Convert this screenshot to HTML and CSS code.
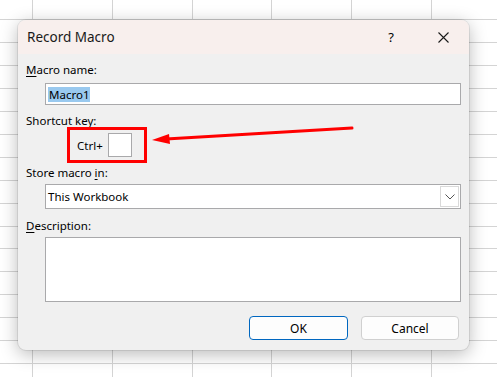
FILE: index.html
```html
<!DOCTYPE html>
<html lang="en">
<head>
<meta charset="UTF-8">
<title>Record Macro</title>
<link rel="stylesheet" href="styles.css">
</head>
<body>

<div class="dialog">
  <div class="title-bar">
    <div class="title">Record Macro</div>
    <div class="title-buttons">
      <span class="help-btn">?</span>
      <svg class="close-btn" width="11" height="11" viewBox="0 0 11 11">
        <path d="M0.5 0.5 L10.5 10.5 M10.5 0.5 L0.5 10.5" stroke="#1a1a1a" stroke-width="1.1" fill="none"/>
      </svg>
    </div>
  </div>

  <div class="dialog-body">
    <div class="label"><u>M</u>acro name:</div>
    <div class="field name-field"><span class="selected">Macro1</span></div>

    <div class="label shortcut-label">Shortcut key:</div>
    <div class="shortcut-row">
      <div class="highlight-box">
        <span class="ctrl">Ctrl+</span>
        <div class="key-box"></div>
      </div>
    </div>

    <div class="label store-label">Store macro <u>i</u>n:</div>
    <div class="field combo">
      <span>This Workbook</span>
      <div class="combo-btn">
        <svg width="10" height="6" viewBox="0 0 10 6"><path d="M0.5 0.5 L5 5 L9.5 0.5" stroke="#555" stroke-width="1" fill="none"/></svg>
      </div>
    </div>

    <div class="label desc-label"><u>D</u>escription:</div>
    <div class="field desc"></div>

    <div class="buttons">
      <button class="btn btn-ok">OK</button>
      <button class="btn">Cancel</button>
    </div>
  </div>

  <!-- annotation arrow -->
  <svg class="arrow" width="220" height="30" viewBox="0 0 220 30">
    <path d="M216 7 L30 18" stroke="#ff0000" stroke-width="3" stroke-linecap="round" fill="none"/>
    <path d="M16 19 L33 13 L34 23 Z" fill="#ff0000"/>
  </svg>
</div>

</body>
</html>
```

FILE: styles.css
```css
body {
  margin: 0;
  width: 497px;
  height: 377px;
  overflow: hidden;
  font-family: 'Segoe UI', 'Noto Sans', sans-serif;
  background-color: #ffffff;
  background-image:
    repeating-linear-gradient(to right, transparent 0, transparent 32px, #d4d4d4 32px, #d4d4d4 33px, transparent 33px, transparent 79.8px),
    repeating-linear-gradient(to bottom, transparent 0, transparent 19.5px, #d4d4d4 19.5px, #d4d4d4 20.5px, transparent 20.5px, transparent 22.9px);
  background-position: 0 0, 0 0;
}

.dialog {
  position: relative;
  margin: 20px 0 0 18px;
  width: 451px;
  height: 330px;
  background-color: #f0f0f0;
  border-radius: 8px;
  box-shadow: 0 4px 18px rgba(0,0,0,.28), 0 0 0 1px rgba(0,0,0,.08);
  overflow: hidden;
  color: #000;
  font-size: 11.5px;
}

.title-bar {
  height: 34px;
  background-color: #f8efed;
  display: flex;
  align-items: center;
  justify-content: space-between;
}

.title {
  font-size: 13.5px;
  padding-left: 9px;
  color: #1a1a1a;
}

.title-buttons {
  display: flex;
  align-items: center;
  padding-right: 20px;
}

.help-btn {
  font-size: 13px;
  margin-right: 44px;
}

.close-btn {
  display: block;
}

.dialog-body {
  padding: 0 8px 0 8px;
  display: flex;
  flex-direction: column;
}

.label {
  height: 16px;
  line-height: 16px;
  margin-top: 8px;
}

.label u {
  text-decoration-thickness: 1px;
  text-underline-offset: 2px;
}

.field {
  margin-left: 19px;
  width: 416px;
  box-sizing: border-box;
  border: 1px solid #a9a9ab;
  background: #fff;
}

.name-field {
  height: 22px;
  margin-top: 5px;
  display: flex;
  align-items: center;
  padding-left: 2px;
}

.selected {
  background: #99c9ef;
  padding: 0 1px;
  line-height: 15px;
}

.shortcut-label {
  margin-top: 8px;
}

.shortcut-row {
  margin-top: -2px;
  padding-left: 41px;
}

.highlight-box {
  width: 80px;
  height: 36px;
  box-sizing: border-box;
  border: 3px solid #ff0000;
  display: flex;
  align-items: center;
  padding-left: 7px;
}

.ctrl {
  width: 31px;
}

.key-box {
  width: 24px;
  height: 24px;
  box-sizing: border-box;
  border: 1px solid #a9a9ab;
  background: #fff;
}

.store-label {
  margin-top: 2px;
}

.combo {
  height: 25px;
  margin-top: 3px;
  display: flex;
  align-items: center;
  justify-content: space-between;
  padding-left: 2px;
}

.combo-btn {
  width: 19px;
  height: 21px;
  margin-right: 1px;
  border: 1px solid #d9d9d9;
  display: flex;
  align-items: center;
  justify-content: center;
  box-sizing: border-box;
}

.desc-label {
  margin-top: 9px;
}

.desc {
  height: 65px;
  margin-top: 3px;
}

.buttons {
  display: flex;
  justify-content: flex-end;
  gap: 13px;
  margin-top: 14px;
  padding-right: 2px;
}

.btn {
  width: 98px;
  height: 24px;
  font-family: 'Segoe UI', 'Noto Sans', sans-serif;
  font-size: 12px;
  background: #fdfdfd;
  border: 1px solid #d0d0d0;
  border-radius: 4px;
  color: #000;
}

.btn-ok {
  width: 99px;
  border-color: #0067c0;
}

.arrow {
  position: absolute;
  left: 118px;
  top: 101px;
}
```
